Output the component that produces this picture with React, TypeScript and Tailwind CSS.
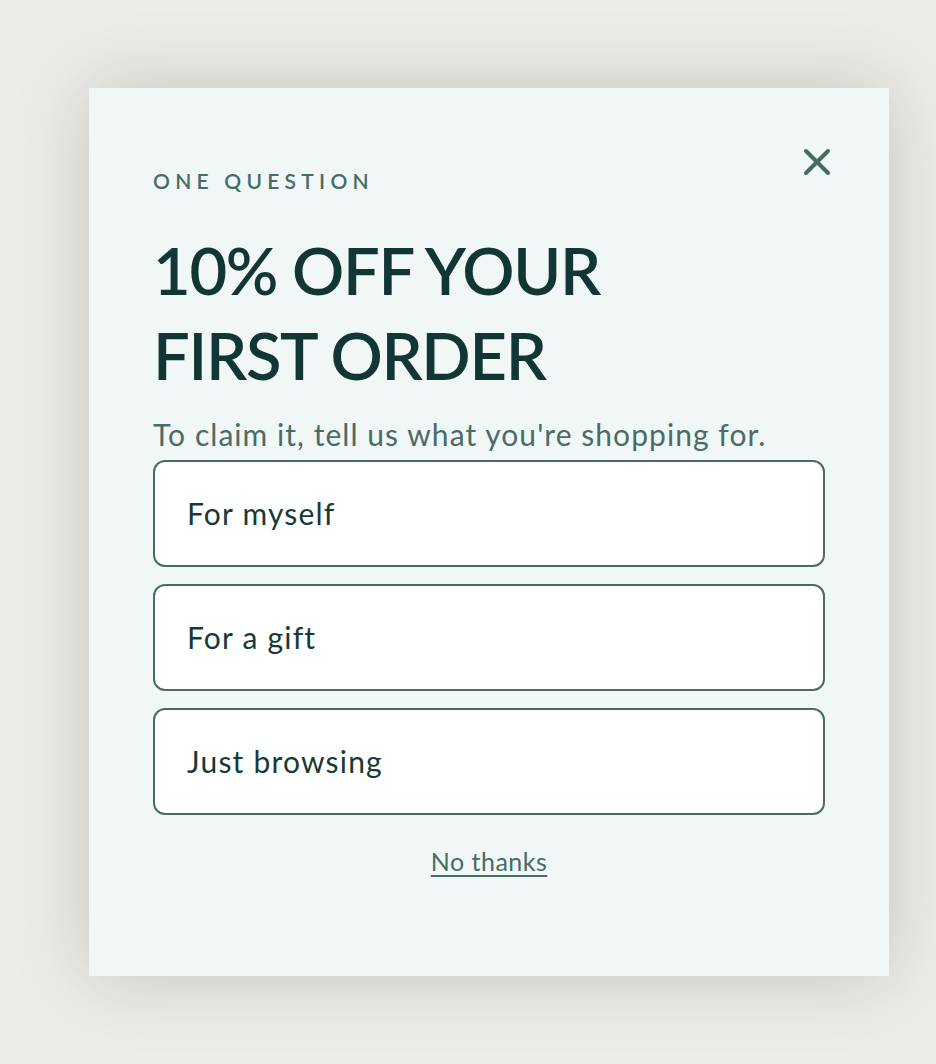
const options = ["For myself", "For a gift", "Just browsing"];

export default function App() {
  return (
    <div className="min-h-[1064px] w-full bg-[#edece8] pl-[89px] pt-[88px] font-['Lato',sans-serif]">
      <div className="relative flex h-[888px] w-[800px] flex-col bg-[#f1f7f7] px-[64px] pt-[80px] shadow-[0_0_70px_rgba(60,55,45,0.22)]">
        {/* Close */}
        <button
          type="button"
          aria-label="Close"
          className="absolute right-[58px] top-[60px] flex h-[28px] w-[28px] items-center justify-center text-[#466a65]"
        >
          <svg width="28" height="28" viewBox="0 0 28 28" fill="none">
            <path d="M3 3L25 25M25 3L3 25" stroke="currentColor" strokeWidth="4" strokeLinecap="round" />
          </svg>
        </button>

        <p className="text-[21px] font-semibold leading-[26px] tracking-[0.25em] text-[#476b66]">ONE QUESTION</p>

        <h1 className="mt-[34px] text-[65px] font-semibold leading-[85px] tracking-[-0.02em] text-[#113634]">
          10% OFF YOUR
          <br />
          FIRST ORDER
        </h1>

        <p className="mt-[18px] text-[30px] leading-[36px] tracking-[0.035em] text-[#4a6b66]">
          To claim it, tell us what you're shopping for.
        </p>

        <div className="mt-[8px] flex flex-col gap-[17px]">
          {options.map((o) => (
            <button
              key={o}
              type="button"
              className="flex h-[107px] w-full items-center rounded-[12px] border-2 border-[#4b6a66] bg-white px-[32px] text-left text-[30px] tracking-[0.04em] text-[#163a36]"
            >
              {o}
            </button>
          ))}
        </div>

        <div className="mt-[30px] flex justify-center">
          <a href="#" className="text-[25px] leading-[32px] tracking-[0.02em] text-[#476b66] underline decoration-[1.5px] underline-offset-[4px]">
            No thanks
          </a>
        </div>
      </div>
    </div>
  );
}
